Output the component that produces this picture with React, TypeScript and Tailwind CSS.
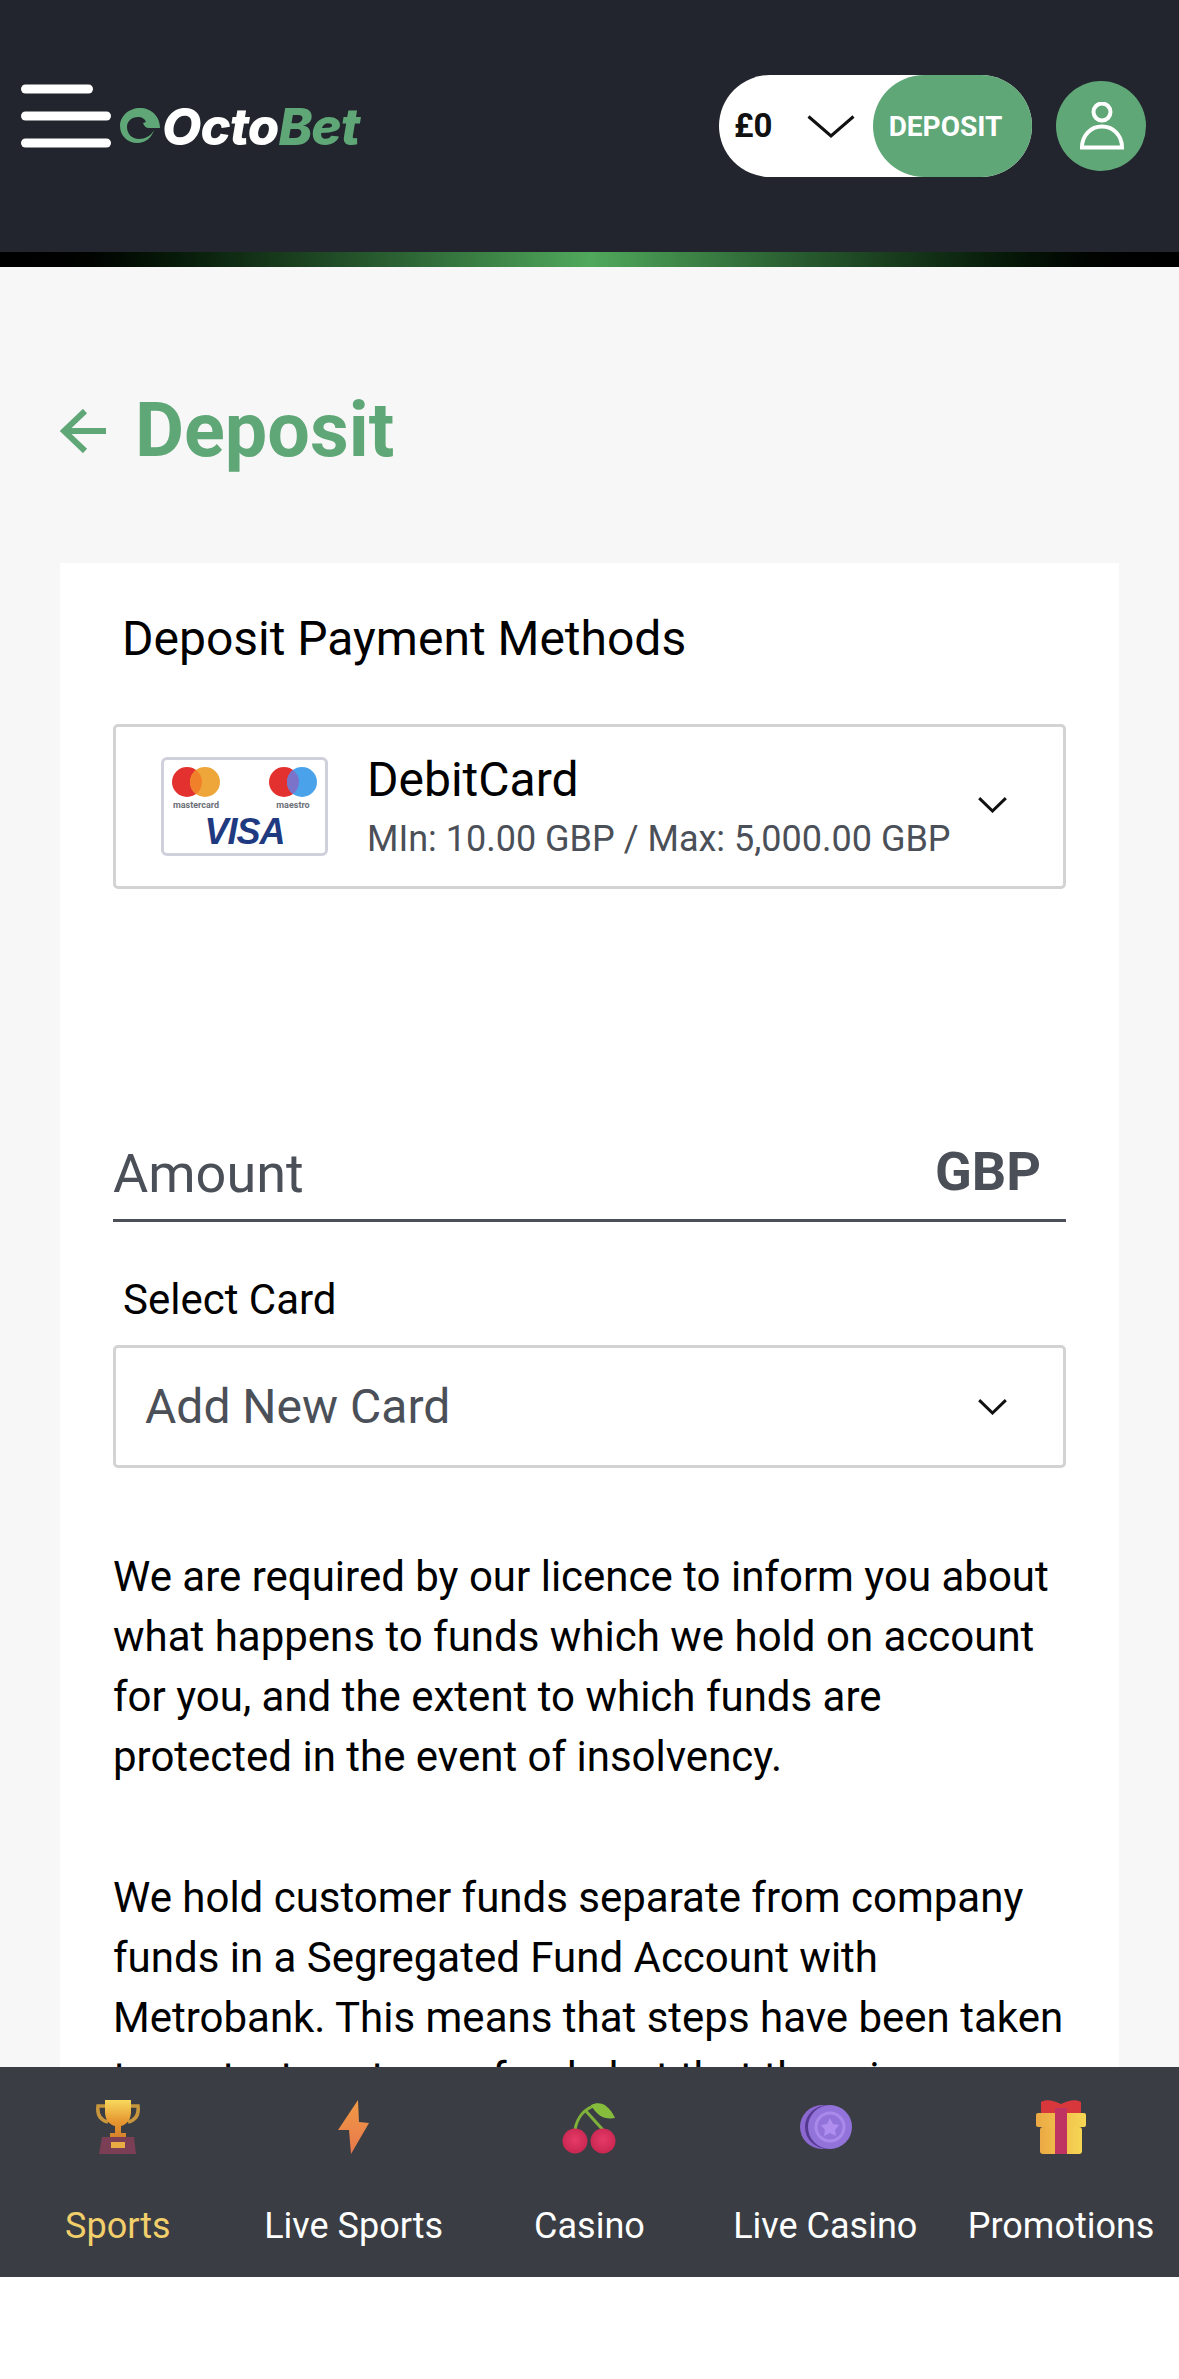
import React from "react";

const Chevron = ({ className }: { className: string }) => (
  <svg viewBox="0 0 29 16" className={className} fill="none" stroke="#111" strokeWidth="3">
    <path d="M1.2 1.2 14.500 14 27.800 1.200" />
  </svg>
);

const LogoMark = () => (
  <svg viewBox="0 0 40 36" className="w-[40px] h-[36px] shrink-0">
    <path
      fill="#5fa777"
      d="M40 20C40 8 31 0 20 0 9 0 0 8 0 18c0 10 8 17 17 17 9 0 15-6 17-13-3 6-9 9-15 9-7 0-12-5-12-12 0-6 5-10 11-10 4 0 7 2 8 5l-3 1c1 3 3 5 6 5Z"
    />
  </svg>
);

const Trophy = () => (
  <svg viewBox="0 0 46 54" className="w-[46px] h-[54px]">
    <defs>
      <linearGradient id="cup" x1="0" y1="0" x2="0" y2="1">
        <stop offset="0" stopColor="#f7d95d" />
        <stop offset="0.6" stopColor="#e6952f" />
        <stop offset="1" stopColor="#d5822a" />
      </linearGradient>
    </defs>
    <path d="M10 6H3c-1 8 2 14 10 16M36 6h7c1 8-2 14-10 16" fill="none" stroke="#c8963c" strokeWidth="3.500" />
    <path d="M10 0h26v12c0 8-5 13-10 14v7h5v4H15v-4h5v-7C15 25 10 20 10 12Z" fill="url(#cup)" />
    <path d="M7 37h32l2 17H4Z" fill="#7a3f55" />
    <rect x="16" y="42" width="14" height="6" fill="#e9ac45" />
  </svg>
);

const Bolt = () => (
  <svg viewBox="0 0 32 54" className="w-[32px] h-[54px]">
    <defs>
      <linearGradient id="bolt" x1="0" y1="0" x2="0" y2="1">
        <stop offset="0" stopColor="#f29a45" />
        <stop offset="1" stopColor="#e6784c" />
      </linearGradient>
    </defs>
    <path d="M20 0 0 30l11 0 2 24L31 23l-10-1Z" fill="url(#bolt)" />
  </svg>
);

const Cherry = () => (
  <svg viewBox="0 0 56 54" className="w-[56px] h-[54px]">
    <defs>
      <radialGradient id="ch" cx="0.5" cy="0.45" r="0.65">
        <stop offset="0" stopColor="#e63a68" />
        <stop offset="1" stopColor="#c4234e" />
      </radialGradient>
    </defs>
    <path d="M14 30C16 17 24 8 36 5M24 10 42 30" fill="none" stroke="#7fb23a" strokeWidth="3" />
    <path d="M30 5C38 1 47 3 54 18 44 20 36 16 30 5Z" fill="#86bd3c" />
    <circle cx="14" cy="41" r="12.500" fill="url(#ch)" />
    <circle cx="42" cy="41" r="12.500" fill="url(#ch)" />
  </svg>
);

const Chip = () => (
  <svg viewBox="0 0 54 44" className="w-[54px] h-[44px]">
    <ellipse cx="24" cy="22" rx="22" ry="22" fill="#8a68cf" />
    <ellipse cx="30" cy="22" rx="23" ry="22" fill="#55388f" />
    <ellipse cx="32" cy="22" rx="22" ry="22" fill="#9173d9" />
    <circle cx="32" cy="22" r="14" fill="none" stroke="#a98aea" strokeWidth="3" />
    <path d="M32 13l3 6 6 1-4 5 1 6-6-3-6 3 1-6-4-5 6-1Z" fill="#b08ef0" />
  </svg>
);

const Gift = () => (
  <svg viewBox="0 0 50 54" className="w-[50px] h-[54px]">
    <defs>
      <linearGradient id="gift" x1="0" y1="0" x2="1" y2="0">
        <stop offset="0" stopColor="#eca944" />
        <stop offset="1" stopColor="#f6d654" />
      </linearGradient>
    </defs>
    <path d="M5 2c5-3 12-2 20 2 8-4 15-5 20-2v12H5Z" fill="#d8383c" />
    <rect x="0" y="13" width="50" height="14" rx="2" fill="url(#gift)" />
    <rect x="4" y="27" width="42" height="27" rx="3" fill="url(#gift)" />
    <rect x="19" y="8" width="12" height="46" fill="#bf3362" />
  </svg>
);

const tabs = [
  { label: "Sports", icon: <Trophy />, active: true },
  { label: "Live Sports", icon: <Bolt /> },
  { label: "Casino", icon: <Cherry /> },
  { label: "Live Casino", icon: <Chip /> },
  { label: "Promotions", icon: <Gift /> },
];

export default function App() {
  return (
    <div className="w-[1179px] h-[2379px] flex flex-col overflow-hidden bg-white font-['Roboto',sans-serif]">
      <header className="h-[252px] shrink-0 bg-[#22252d] flex items-center pl-[21px] pr-[33px]">
        <div className="w-[90px] flex flex-col gap-[18px] shrink-0 -translate-y-[10.5px]">
          <div className="h-[9px] w-[72px] rounded-full bg-white" />
          <div className="h-[9px] w-[90px] rounded-full bg-white" />
          <div className="h-[9px] w-[90px] rounded-full bg-white" />
        </div>
        <div className="ml-[9px] flex items-center">
          <LogoMark />
          <span className="ml-[2px] text-[51px] leading-none font-extrabold italic tracking-[-1px] font-['Inter',sans-serif]">
            <span className="text-white">Octo</span>
            <span className="text-[#5fa777]">Bet</span>
          </span>
        </div>
        <div className="ml-auto flex items-center gap-[24px]">
          <div className="w-[313px] h-[102px] rounded-full bg-white flex items-center">
            <span className="ml-[15px] text-[33px] font-bold text-[#111]">£0</span>
            <svg viewBox="0 0 48 23" className="ml-[34px] w-[48px] h-[23px]" fill="none" stroke="#111" strokeWidth="3">
              <path d="M1.500 1.500 24 21 46.500 1.500" />
            </svg>
            <span className="ml-auto h-[102px] w-[159px] rounded-full bg-[#5fa777] flex items-center justify-center text-white text-[28px] font-bold pr-[14px] pt-[2px]">
              DEPOSIT
            </span>
          </div>
          <div className="w-[90px] h-[90px] rounded-full bg-[#5fa777] flex items-center justify-center">
            <svg viewBox="0 0 44 48" className="w-[44px] h-[48px] ml-[2px]" fill="none" stroke="#fff" strokeWidth="4">
              <circle cx="22" cy="10" r="8.500" />
              <path d="M2 45.500h40C42 33 33 24.500 22 24.500S2 33 2 45.500Z" />
            </svg>
          </div>
        </div>
      </header>
      <div className="h-[15px] shrink-0 bg-gradient-to-r from-black via-[#50a95c] to-black" />
      <main className="flex-1 min-h-0 overflow-hidden bg-[#f7f7f7] px-[60px]">
        <div className="h-[296px] flex items-center pt-[32px]">
          <svg viewBox="0 0 46 44" className="w-[46px] h-[44px] shrink-0" fill="none" stroke="#5fa777" strokeWidth="6">
            <path d="M25 2 4 22l21 20M4 22h42" />
          </svg>
          <h1 className="ml-[29px] text-[75.5px] leading-none font-bold text-[#5fa777]">Deposit</h1>
        </div>
        <section className="bg-white px-[53px] pt-[47px] text-black">
          <h2 className="pl-[9px] text-[48px] leading-[58px]">Deposit Payment Methods</h2>
          <div className="mt-[56px] h-[165px] border-[3px] border-[#d3d3d3] rounded-[5px] flex items-center pl-[45px]">
            <div className="w-[167px] h-[99px] shrink-0 border-[3px] border-[#d0d0dc] rounded-[6px] flex flex-col items-center">
              <svg viewBox="0 0 161 50" className="w-[161px] h-[50px]">
                <circle cx="23" cy="22" r="15" fill="#e2312f" />
                <circle cx="41" cy="22" r="15" fill="#eea63a" />
                <circle cx="120" cy="22" r="15" fill="#e2312f" />
                <circle cx="138" cy="22" r="15" fill="#4aa3ea" />
                <path d="M129 10a15 15 0 0 1 0 24 15 15 0 0 1 0-24Z" fill="#7b72c9" />
                <path d="M32 10a15 15 0 0 1 0 24 15 15 0 0 1 0-24Z" fill="#f0802a" />
                <text x="32" y="48" textAnchor="middle" fontSize="9" fontWeight="700" fill="#6b7078">mastercard</text>
                <text x="129" y="48" textAnchor="middle" fontSize="9" fontWeight="700" fill="#6b7078">maestro</text>
              </svg>
              <span className="text-[36px] leading-[43px] font-bold italic tracking-[-1px] text-[#1f3a80] font-['Liberation_Sans',sans-serif]">VISA</span>
            </div>
            <div className="ml-[39px] flex-1 min-w-0 pt-[6px]">
              <div className="text-[48px] leading-[56px]">DebitCard</div>
              <div className="mt-[3px] text-[36px] leading-[56px] text-[#4b5058] whitespace-nowrap">MIn: 10.00 GBP / Max: 5,000.00 GBP</div>
            </div>
            <Chevron className="w-[29px] h-[16px] mr-[56px] mt-[-4px] shrink-0" />
          </div>

          <div className="mt-[253px] h-[80px] border-b-[3px] border-[#4b5058] flex items-start justify-between pr-[25px] pt-[2px]">
            <span className="text-[54px] leading-[60px] text-[#4b5058]">Amount</span>
            <span className="text-[54px] leading-[56px] font-bold text-[#4b5058]">GBP</span>
          </div>

          <div className="mt-[54px] pl-[10px] text-[42px] leading-[48px]">Select Card</div>
          <div className="mt-[21px] h-[123px] border-[3px] border-[#d3d3d3] rounded-[5px] flex items-center justify-between pl-[29px]">
            <span className="text-[48px] leading-none text-[#4b5058]">Add New Card</span>
            <Chevron className="w-[29px] h-[16px] mr-[56px] shrink-0" />
          </div>

          <p className="mt-[79px] text-[42px] leading-[60px]">
            We are required by our licence to inform you about what happens to funds which we hold on account for you, and the extent to which funds are protected in the event of insolvency.
          </p>
          <p className="mt-[81px] text-[42px] leading-[60px]">
            We hold customer funds separate from company funds in a Segregated Fund Account with Metrobank. This means that steps have been taken to protect customer funds but that there is no absolute guarantee that no losses will occur.
          </p>
        </section>
      </main>
      <nav className="h-[210px] shrink-0 bg-[#3a3d43] grid grid-cols-5">
        {tabs.map((t) => (
          <div key={t.label} className="flex flex-col items-center pt-[33px]">
            <div className="h-[54px] flex items-center">{t.icon}</div>
            <div className={`mt-[50px] text-[36px] leading-[44px] whitespace-nowrap ${t.active ? "text-[#f2cf6b]" : "text-white"}`}>{t.label}</div>
          </div>
        ))}
      </nav>
      <div className="h-[102px] shrink-0 bg-white" />
    </div>
  );
}
